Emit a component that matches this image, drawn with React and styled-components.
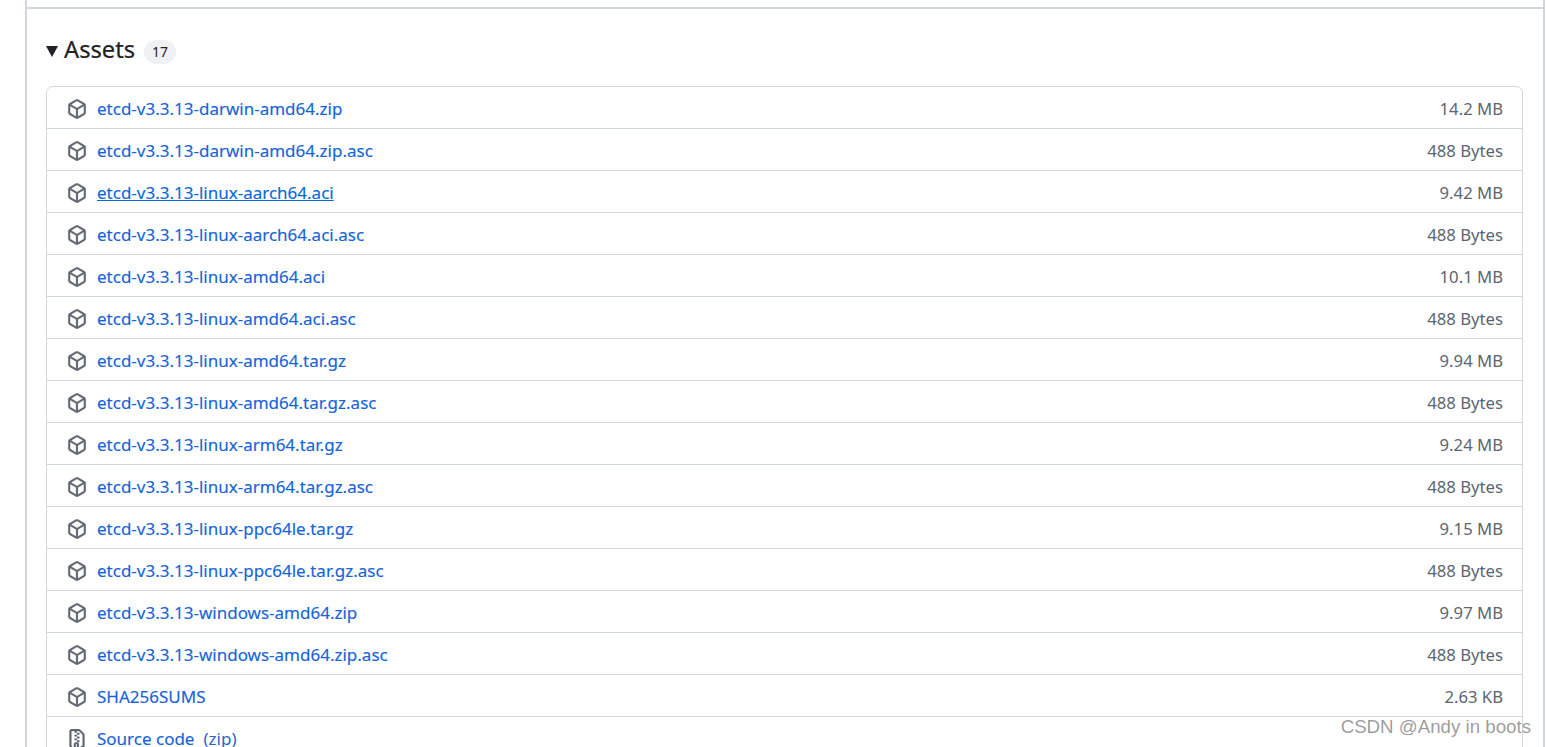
import React from "react";
import styled, { createGlobalStyle } from "styled-components";

const GlobalStyle = createGlobalStyle`
    html, body {
        margin: 0;
        height: 100%;
        overflow: hidden;
        background: #ffffff;
        font-family: "Noto Sans", "Open Sans", sans-serif;
    }
`;

const Page = styled.div`
    position: relative;
    height: 747px;
    overflow: hidden;
    padding: 0 1px 0 25px;
    box-sizing: border-box;
`;

const Release = styled.div`
    height: 100%;
    border-left: 2px solid #d0d7de;
    border-right: 2px solid #d0d7de;
    box-sizing: border-box;
`;

const TopStrip = styled.div`
    height: 7px;
    border-bottom: 2px solid #d0d7de;
`;

const Section = styled.section`
    padding: 22px 20px 0 19px;
`;

const Summary = styled.div`
    display: flex;
    align-items: center;
    height: 36px;
    margin-bottom: 19px;
`;

const Caret = styled.span`
    width: 0;
    height: 0;
    margin: 4px 6px 0 0;
    border-left: 6px solid transparent;
    border-right: 6px solid transparent;
    border-top: 11px solid #1f2328;
`;

const Title = styled.h3`
    margin: 0;
    font-size: 23.7px;
    font-weight: 400;
    line-height: 36px;
    color: #1f2328;
    -webkit-text-stroke: 0.2px #1f2328;
`;

const Counter = styled.span`
    display: inline-flex;
    align-items: center;
    justify-content: center;
    width: 32px;
    height: 24px;
    margin: 5px 0 0 9px;
    border-radius: 12px;
    background: #eff1f3;
    color: #1f2328;
    font-size: 14px;
`;

const AssetBox = styled.ul`
    margin: 0;
    padding: 0;
    list-style: none;
    border: 1px solid #d0d7de;
    border-radius: 7px;
`;

const AssetRow = styled.li`
    display: flex;
    align-items: center;
    box-sizing: border-box;
    height: 41px;
    padding: 2px 19px 0 20px;
    & + & {
        height: 42px;
        border-top: 1px solid #d0d7de;
    }
`;

const IconSlot = styled.svg`
    flex: none;
    width: 20px;
    height: 20px;
    margin-right: 10px;
    fill: #5f6770;
    stroke: #5f6770;
    stroke-width: 0.2;
`;

const AssetLink = styled.a`
    color: ${(props) => (props.$hover ? "#0969da" : "#1664d8")};
    font-size: 17px;
    -webkit-text-stroke: 0.15px currentColor;
    text-decoration: ${(props) => (props.$hover ? "underline" : "none")};
`;

const Format = styled.span`
    margin-left: 9px;
    font-size: 17px;
    color: #2b66c9;
`;

const Size = styled.span`
    margin-left: auto;
    color: #5c6570;
    font-size: 16.7px;
`;

const Watermark = styled.div`
    position: absolute;
    right: 15px;
    bottom: 10px;
    color: rgba(90, 90, 90, 0.6);
    font-family: "Liberation Sans", Arial, sans-serif;
    font-size: 18.7px;
    line-height: 20px;
`;

const assets = [
    ["etcd-v3.3.13-darwin-amd64.zip", "14.2 MB"],
    ["etcd-v3.3.13-darwin-amd64.zip.asc", "488 Bytes"],
    ["etcd-v3.3.13-linux-aarch64.aci", "9.42 MB"],
    ["etcd-v3.3.13-linux-aarch64.aci.asc", "488 Bytes"],
    ["etcd-v3.3.13-linux-amd64.aci", "10.1 MB"],
    ["etcd-v3.3.13-linux-amd64.aci.asc", "488 Bytes"],
    ["etcd-v3.3.13-linux-amd64.tar.gz", "9.94 MB"],
    ["etcd-v3.3.13-linux-amd64.tar.gz.asc", "488 Bytes"],
    ["etcd-v3.3.13-linux-arm64.tar.gz", "9.24 MB"],
    ["etcd-v3.3.13-linux-arm64.tar.gz.asc", "488 Bytes"],
    ["etcd-v3.3.13-linux-ppc64le.tar.gz", "9.15 MB"],
    ["etcd-v3.3.13-linux-ppc64le.tar.gz.asc", "488 Bytes"],
    ["etcd-v3.3.13-windows-amd64.zip", "9.97 MB"],
    ["etcd-v3.3.13-windows-amd64.zip.asc", "488 Bytes"],
    ["SHA256SUMS", "2.63 KB"],
];

function PackageIcon() {
    return (
        <IconSlot viewBox="0 0 16 16">
            <path d="m8.878.392 5.25 3.045c.54.314.872.89.872 1.514v6.098a1.75 1.75 0 0 1-.872 1.514l-5.25 3.045a1.75 1.75 0 0 1-1.756 0l-5.25-3.045A1.75 1.75 0 0 1 1 11.049V4.951c0-.624.332-1.201.872-1.514L7.122.392a1.75 1.75 0 0 1 1.756 0ZM7.875 1.69l-4.63 2.685L8 7.133l4.755-2.758-4.63-2.685a.248.248 0 0 0-.25 0ZM2.5 5.677v5.372c0 .09.047.171.125.216l4.625 2.683V8.432Zm6.25 8.271 4.625-2.683a.25.25 0 0 0 .125-.216V5.677L8.75 8.432Z" />
        </IconSlot>
    );
}

function ZipIcon() {
    return (
        <IconSlot viewBox="0 0 16 16">
            <path d="M3.5 1.75v11.5c0 .09.048.173.126.217a.75.75 0 0 1-.752 1.298A1.748 1.748 0 0 1 2 13.25V1.75C2 .784 2.784 0 3.75 0h5.586c.464 0 .909.185 1.237.513l2.914 2.914c.329.328.513.773.513 1.237v8.586A1.75 1.75 0 0 1 12.25 15h-.5a.75.75 0 0 1 0-1.5h.5a.25.25 0 0 0 .25-.25V4.664a.25.25 0 0 0-.073-.177L9.513 1.573a.25.25 0 0 0-.177-.073H7.25a.75.75 0 0 1 0 1.5h-.5a.75.75 0 0 1 0-1.5h-3a.25.25 0 0 0-.25.25Zm3.75 8.75h.5c.966 0 1.75.784 1.75 1.75v3a.75.75 0 0 1-.75.75h-2.5a.75.75 0 0 1-.75-.75v-3c0-.966.784-1.75 1.75-1.75ZM6 5.25a.75.75 0 0 1 .75-.75h.5a.75.75 0 0 1 0 1.5h-.5A.75.75 0 0 1 6 5.25Zm.75 2.25h.5a.75.75 0 0 1 0 1.5h-.5a.75.75 0 0 1 0-1.5ZM8 6.75A.75.75 0 0 1 8.75 6h.5a.75.75 0 0 1 0 1.5h-.5A.75.75 0 0 1 8 6.75ZM8.75 3h.5a.75.75 0 0 1 0 1.5h-.5a.75.75 0 0 1 0-1.5ZM8 9.75A.75.75 0 0 1 8.75 9h.5a.75.75 0 0 1 0 1.5h-.5A.75.75 0 0 1 8 9.75Zm-1 2.5v2.25h1v-2.25a.25.25 0 0 0-.25-.25h-.5a.25.25 0 0 0-.25.25Z" />
        </IconSlot>
    );
}

function App() {
    return (
        <React.Fragment>
            <GlobalStyle />
            <Page>
                <Release>
                    <TopStrip />
                    <Section>
                        <Summary>
                            <Caret />
                            <Title>Assets</Title>
                            <Counter>17</Counter>
                        </Summary>
                        <AssetBox>
                            {assets.map(([name, size]) => (
                                <AssetRow key={name}>
                                    <PackageIcon />
                                    <AssetLink
                                        href="#"
                                        $hover={name.endsWith("aarch64.aci")}
                                    >
                                        {name}
                                    </AssetLink>
                                    <Size>{size}</Size>
                                </AssetRow>
                            ))}
                            <AssetRow>
                                <ZipIcon />
                                <AssetLink href="#">Source code</AssetLink>
                                <Format>(zip)</Format>
                            </AssetRow>
                        </AssetBox>
                    </Section>
                </Release>
                <Watermark>CSDN @Andy in boots</Watermark>
            </Page>
        </React.Fragment>
    );
}

export default App;
